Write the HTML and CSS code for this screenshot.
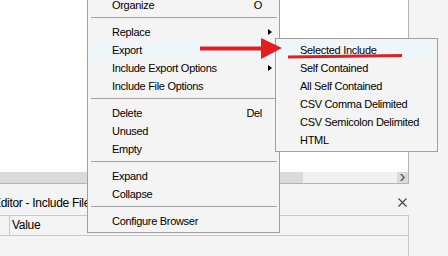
FILE: index.html
```html
<!DOCTYPE html>
<html lang="en">
<head>
    <meta charset="UTF-8">
    <title>Browser - Export</title>
    <link rel="stylesheet" href="styles.css">
</head>
<body>
    <div class="window">
        <div class="top">
            <div class="tree">
                <div class="hscroll">
                    <div class="thumb"></div>
                    <div class="track"></div>
                    <div class="scroll-btn">
                        <svg width="5" height="7" viewBox="0 0 5 7"><path d="M0 0h2l3 3.5-3 3.5h-2l3-3.5z" fill="#606060"/></svg>
                    </div>
                </div>
            </div>
            <div class="side"></div>
        </div>
        <div class="panel">
            <div class="panel-title">
                <span class="title-text">Editor - Include File</span>
                <svg class="close" width="9" height="9" viewBox="0 0 9 9"><path d="M0.5 0.5l8 8M8.5 0.5l-8 8" stroke="#404040" stroke-width="1.1"/></svg>
            </div>
            <div class="grid">
                <div class="grid-head">
                    <div class="col-name"></div>
                    <div class="col-value">Value</div>
                </div>
            </div>
        </div>
    </div>

    <div class="menu main-menu">
        <div class="item"><span>Organize</span><span class="key">O</span></div>
        <div class="sep"></div>
        <div class="item"><span>Replace</span><span class="arrow"></span></div>
        <div class="item active"><span>Export</span><span class="arrow"></span></div>
        <div class="item"><span>Include Export Options</span><span class="arrow"></span></div>
        <div class="item"><span>Include File Options</span></div>
        <div class="sep"></div>
        <div class="item"><span>Delete</span><span class="key">Del</span></div>
        <div class="item"><span>Unused</span></div>
        <div class="item"><span>Empty</span></div>
        <div class="sep"></div>
        <div class="item"><span>Expand</span></div>
        <div class="item"><span>Collapse</span></div>
        <div class="sep"></div>
        <div class="item"><span>Configure Browser</span></div>
    </div>

    <div class="menu sub-menu">
        <div class="item active"><span>Selected Include</span></div>
        <div class="item"><span>Self Contained</span></div>
        <div class="item"><span>All Self Contained</span></div>
        <div class="item"><span>CSV Comma Delimited</span></div>
        <div class="item"><span>CSV Semicolon Delimited</span></div>
        <div class="item"><span>HTML</span></div>
    </div>

    <!-- red annotation drawn over the screenshot -->
    <svg class="annot" width="448" height="256" viewBox="0 0 448 256">
        <path d="M200 46.5h62v4h-62z" fill="#e41e20"/>
        <path d="M261 38l21 10-21 11z" fill="#e41e20"/>
        <path d="M288 55.5l114-1.5v3l-114 1.5z" fill="#e41e20"/>
    </svg>
</body>
</html>
```

FILE: styles.css
```css
body {
    margin: 0;
    width: 448px;
    height: 256px;
    overflow: hidden;
    position: relative;
    font-family: "Liberation Sans", Arial, sans-serif;
    font-size: 11px;
    letter-spacing: -0.3px;
    color: #000;
    background-color: #f4f4f4;
}
.window {
    display: flex;
    flex-direction: column;
    height: 256px;
}
.top {
    display: flex;
    height: 191px;
}
.tree {
    width: 408px;
    background-color: #fff;
    border-right: 1px solid #b4b4b4;
    border-bottom: 1px solid #b4b4b4;
    display: flex;
    flex-direction: column;
    justify-content: flex-end;
}
.hscroll {
    display: flex;
    height: 11px;
}
.thumb {
    width: 303px;
    background-color: #dadada;
}
.track {
    flex: 1;
    background-color: #f0f0f0;
}
.scroll-btn {
    width: 11px;
    background-color: #dadada;
    display: flex;
    align-items: center;
    justify-content: center;
}
.side {
    flex: 1;
    background-color: #f4f4f4;
}
.panel {
    flex: 1;
    background-color: #f4f4f4;
}
.panel-title {
    height: 31px;
    width: 408px;
    display: flex;
    align-items: center;
    justify-content: space-between;
    padding-top: 6px;
    box-sizing: border-box;
    font-size: 12px;
}
.title-text {
    margin-left: -7px;
    white-space: nowrap;
}
.close {
    margin-right: 1px;
}
.grid {
    width: 408px;
    border-top: 1px solid #c8c8c8;
    border-right: 1px solid #c8c8c8;
    height: 40px;
}
.grid-head {
    display: flex;
    height: 19px;
    border-bottom: 1px solid #c8c8c8;
}
.col-name {
    width: 9px;
    border-right: 1px solid #c8c8c8;
}
.col-value {
    padding-left: 2px;
    line-height: 19px;
    font-size: 12px;
}
.menu {
    position: absolute;
    background-color: #f4f4f4;
    border: 1px solid #a0a0a0;
    padding: 2px;
    white-space: nowrap;
}
.main-menu {
    left: 87px;
    top: -7px;
    width: 187px;
}
.sub-menu {
    left: 275px;
    top: 38px;
    width: 157px;
}
.item {
    height: 18px;
    line-height: 18px;
    padding: 0 15px 0 22px;
    display: flex;
    justify-content: space-between;
    align-items: center;
    position: relative;
}
.item.active {
    background-color: #eef6fa;
}
.arrow {
    position: absolute;
    right: 5px;
    top: 6px;
    border-left: 4px solid #000;
    border-top: 3.5px solid transparent;
    border-bottom: 3.5px solid transparent;
}
.sep {
    height: 9px;
    padding-top: 3px;
    box-sizing: border-box;
}
.sep::before {
    content: "";
    display: block;
    height: 1px;
    margin-left: 1px;
    background-color: #a0a0a0;
}
.annot {
    position: absolute;
    left: 0;
    top: 0;
}
```
